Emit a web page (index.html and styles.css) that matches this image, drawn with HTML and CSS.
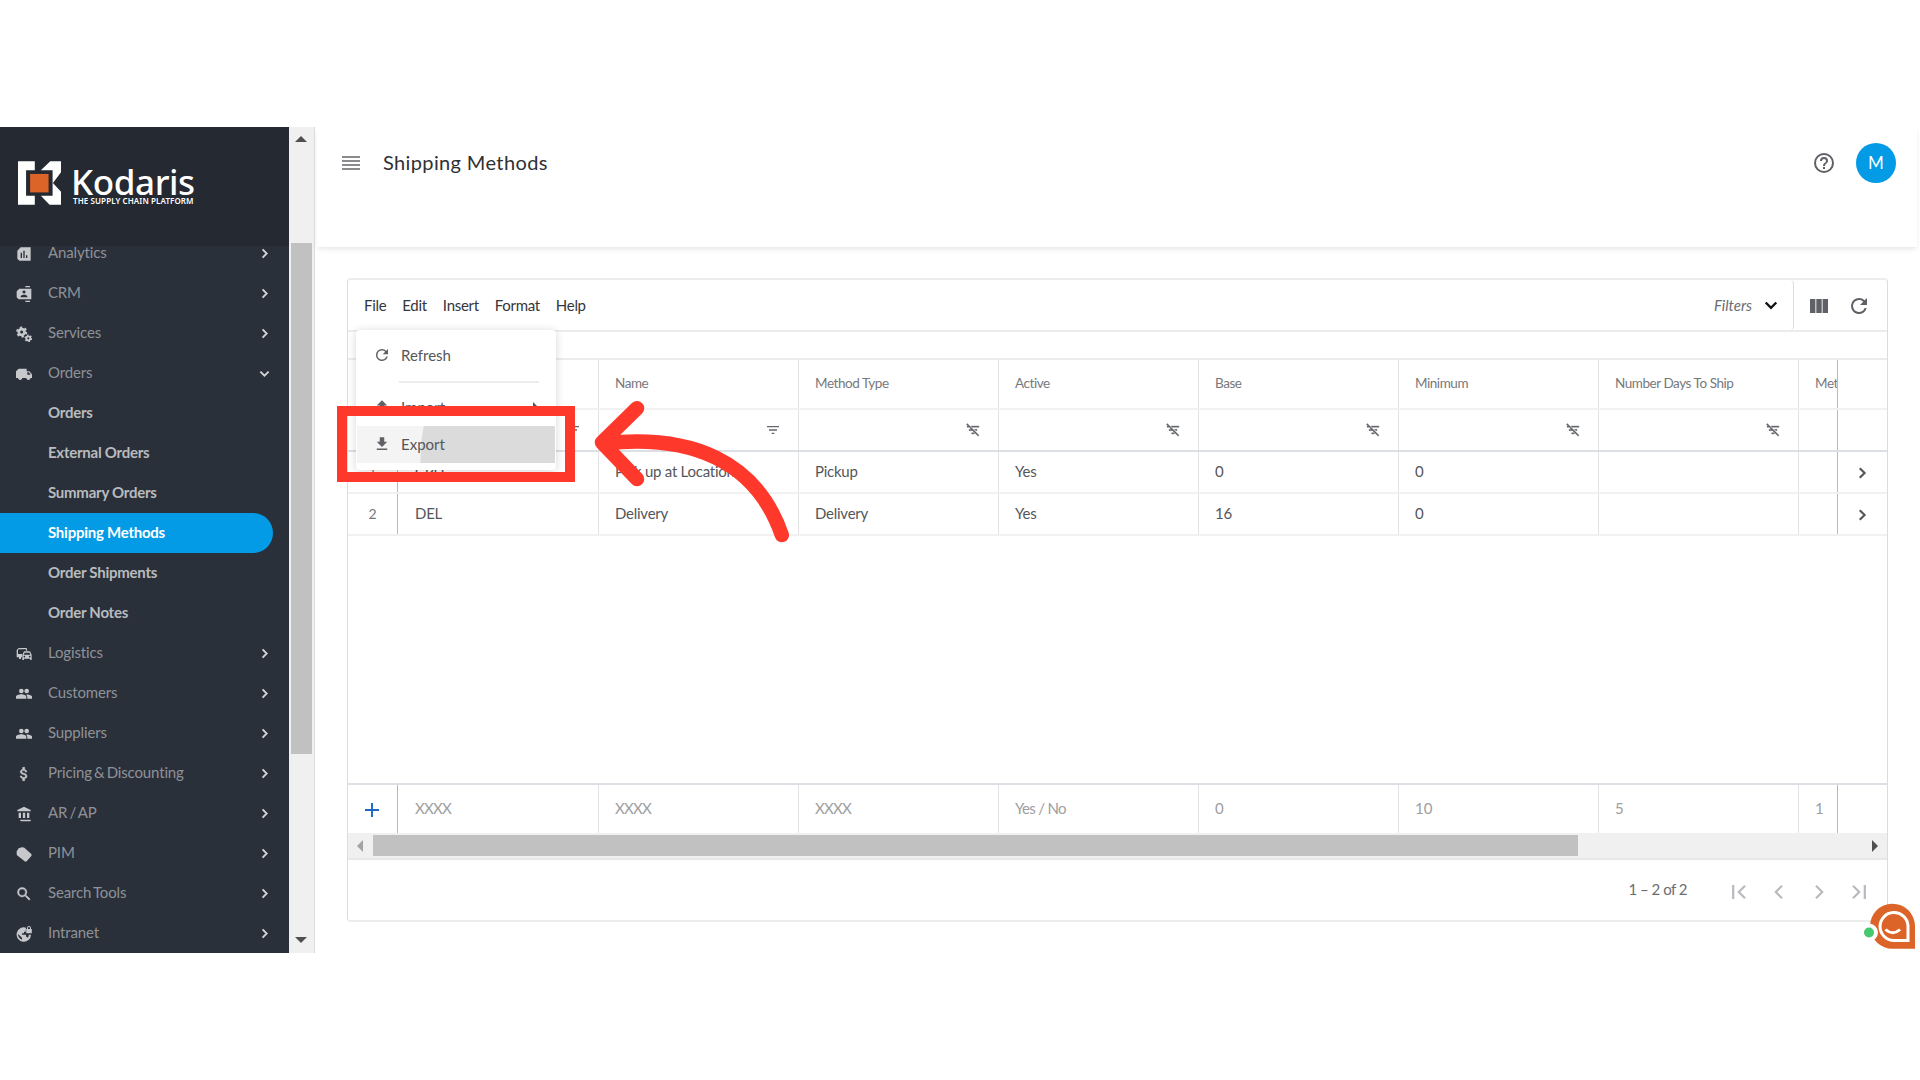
FILE: index.html
```html
<!DOCTYPE html>
<html lang="en">
<head>
    <meta charset="UTF-8">
    <meta name="viewport" content="width=device-width, initial-scale=1.0">
    <title>Shipping Methods - Kodaris</title>
    <link rel="stylesheet" href="styles.css">
</head>
<body>
    <!-- Shared icons -->
    <svg class="sprite" width="0" height="0">
        <symbol id="chevron" viewBox="0 0 24 24"><path d="M9.3 6.2L15.1 12l-5.8 5.8" fill="none" stroke="currentColor" stroke-width="2.6"/></symbol>
        <symbol id="refresh" viewBox="0 0 24 24"><path d="M17.65 6.35A7.96 7.96 0 0 0 12 4a8 8 0 1 0 7.73 10h-2.08A6 6 0 1 1 12 6c1.66 0 3.14.69 4.22 1.78L13 11h7V4z"/></symbol>
        <symbol id="people" viewBox="0 0 24 24"><circle cx="8" cy="7.5" r="3.5"/><circle cx="16" cy="7.5" r="3.5"/><path d="M0 19v-2.5c0-2.500 4.500-4 8-4s7.500 1.500 7.500 4V19zM17 19v-2.500c0-1.600-.7-2.900-1.800-3.900C19 12.400 24.500 14 24.500 16.500V19z"/></symbol>
        <symbol id="filter" viewBox="0 0 24 24"><path d="M10 18h4v-2h-4zM3 6v2h18V6zm3 7h12v-2H6z"/></symbol>
        <symbol id="filter-off" viewBox="0 0 24 24"><path d="M10.800 8H21V6H8.800zM16.500 13H18v-2h-4zM10 18h4v-2h-4zM21 19.800L3.500 2.300 2.100 3.700 4.400 6H3v2h3.400l3 3H6v2h5.400l8.200 8.200z" stroke="currentColor" stroke-width=".5"/></symbol>
        <symbol id="download" viewBox="0 0 24 24"><path d="M19 9h-4V3H9v6H5l7 7zM5 18v2h14v-2z"/></symbol>
        <symbol id="upload" viewBox="0 0 24 24"><path d="M9 16h6v-6h4l-7-7-7 7h4zm-4 2h14v2H5z"/></symbol>
    </svg>

    <div class="app">
        <aside class="sidebar">
            <div class="brand">
                <svg class="brand-mark" viewBox="54 125 128 130">
                    <path d="M54 125h50v27H78v76h26v27H54zM122 152l28-27h32v33l-24 32 24 26v39h-34l-26-27h35v-76z" fill="#fff"/>
                    <path d="M90 163h55v55H90z" fill="#dd6428"/>
                </svg>
                <div class="brand-text">
                    <span class="brand-name">Kodaris</span>
                    <span class="brand-tag">THE SUPPLY CHAIN PLATFORM</span>
                </div>
            </div>
            <nav class="nav">
                <ul class="nav-list">
                    <li class="nav-item"><svg class="nav-icon" viewBox="0 0 24 24"><path fill-rule="evenodd" d="M7 2h15v20H5l-3-3V7zM7 10v8h2v-8zm4-3v11h2V7zm4 7v4h2v-4z"/></svg><span>Analytics</span><svg class="nav-arrow"><use href="#chevron"/></svg></li>
                    <li class="nav-item"><svg class="nav-icon" viewBox="0 0 24 24"><path fill-rule="evenodd" d="M14 0h7v2h-7zM14 22h7v2h-7zM5 4h18v16H4l-3-3V8zM12 6.800a2.300 2.300 0 1 0 .1 0zM7 17h10v-1.500c0-1.700-3.300-2.500-5-2.500s-5 .8-5 2.500z"/></svg><span>CRM</span><svg class="nav-arrow"><use href="#chevron"/></svg></li>
                    <li class="nav-item"><svg class="nav-icon" viewBox="0 0 24 24"><g fill="none" stroke="currentColor"><circle cx="8.500" cy="9" r="4.300" stroke-width="4"/><circle cx="8.500" cy="9" r="6.800" stroke-width="3" stroke-dasharray="3.560 3.560"/><circle cx="18.500" cy="18.500" r="3" stroke-width="2.800"/><circle cx="18.500" cy="18.500" r="4.800" stroke-width="2" stroke-dasharray="2.500 2.500"/></g></svg><span>Services</span><svg class="nav-arrow"><use href="#chevron"/></svg></li>
                    <li class="nav-item"><svg class="nav-icon" viewBox="0 0 24 24"><path fill-rule="evenodd" d="M4 4h12v4h4l4 4.500V18h-2.200a3.200 3.200 0 0 1-6.300 0H9.500a3.200 3.200 0 0 1-6.300 0H0V8zM17 9.500V13h5l-2.700-3.500z"/><circle cx="6.300" cy="18.300" r="2.500"/><circle cx="18.600" cy="18.300" r="2.500"/></svg><span>Orders</span><svg class="nav-arrow nav-arrow-open"><use href="#chevron"/></svg></li>
                    <li class="nav-item nav-sub">Orders</li>
                    <li class="nav-item nav-sub">External Orders</li>
                    <li class="nav-item nav-sub">Summary Orders</li>
                    <li class="nav-item nav-sub active">Shipping Methods</li>
                    <li class="nav-item nav-sub">Order Shipments</li>
                    <li class="nav-item nav-sub">Order Notes</li>
                    <li class="nav-item"><svg class="nav-icon" viewBox="0 0 24 24"><path fill-rule="evenodd" d="M4 3h12l1 4h-2V5H4L3 6v6h6v5H7.500v2.500h-3V17H1V6zM12 8h9l2.500 5v8h-2.300v-2H12v2H9.500v-8zM12.800 10l-1 3h9.600l-1-3zM12.500 14.800a1.200 1.200 0 1 0 .1 0zM20.500 14.800a1.200 1.200 0 1 0 .1 0z"/></svg><span>Logistics</span><svg class="nav-arrow"><use href="#chevron"/></svg></li>
                    <li class="nav-item"><svg class="nav-icon"><use href="#people"/></svg><span>Customers</span><svg class="nav-arrow"><use href="#chevron"/></svg></li>
                    <li class="nav-item"><svg class="nav-icon"><use href="#people"/></svg><span>Suppliers</span><svg class="nav-arrow"><use href="#chevron"/></svg></li>
                    <li class="nav-item"><svg class="nav-icon" viewBox="0 0 24 24"><path d="M11.800 10.900c-2.270-.59-3-1.200-3-2.150 0-1.090 1.010-1.850 2.700-1.850 1.780 0 2.440.85 2.500 2.100h2.210c-.07-1.720-1.120-3.300-3.210-3.810V2h-3v3.160c-1.940.42-3.500 1.680-3.500 3.610 0 2.310 1.910 3.460 4.700 4.130 2.500.6 3 1.480 3 2.410 0 .69-.49 1.790-2.700 1.790-2.060 0-2.870-.92-2.980-2.100h-2.200c.12 2.190 1.760 3.420 3.680 3.830V22h3v-3.150c1.950-.37 3.500-1.500 3.500-3.550 0-2.840-2.430-3.810-4.700-4.400z" stroke="currentColor" stroke-width=".8"/></svg><span>Pricing &amp; Discounting</span><svg class="nav-arrow"><use href="#chevron"/></svg></li>
                    <li class="nav-item"><svg class="nav-icon" viewBox="0 0 24 24"><path d="M12 1l10 5v2H2V6zM4 10h3.500v8H4zM10.300 10h3.500v8h-3.500zM16.500 10H20v8h-3.500zM6 20.500h16V23H7z"/></svg><span>AR / AP</span><svg class="nav-arrow"><use href="#chevron"/></svg></li>
                    <li class="nav-item"><svg class="nav-icon" viewBox="0 0 24 24"><path d="M4 3.500Q10 .5 12.500 2.500L23 12q1 1.500 0 3l-7 8q-1.500 1-3 0L3 15Q1 14 1 12V8z"/></svg><span>PIM</span><svg class="nav-arrow"><use href="#chevron"/></svg></li>
                    <li class="nav-item"><svg class="nav-icon" viewBox="1 1 22 22"><path d="M15.500 14h-.79l-.28-.27A6.470 6.470 0 0 0 16 9.500 6.500 6.500 0 1 0 9.500 16c1.610 0 3.090-.59 4.230-1.570l.27.28v.79l5 4.990L20.490 19zm-6 0a4.500 4.500 0 1 1 0-9 4.500 4.500 0 0 1 0 9z" stroke="currentColor" stroke-width=".6"/></svg><span>Search Tools</span><svg class="nav-arrow"><use href="#chevron"/></svg></li>
                    <li class="nav-item"><svg class="nav-icon" viewBox="0 0 24 24"><path fill-rule="evenodd" d="M15 2.500A10.800 10.800 0 1 0 22.500 13H19c.2 2.500-.7 4-1.500 5-.5-1.200-1.300-1.700-2.500-1.700V13H9v-2h3V8.500h2.500zM3 12l6 5.500v3C5.500 19.500 3 16 3 12z"/><path fill-rule="evenodd" d="M16.500 4.500V3a3 3 0 0 1 6 0v1.500h1.200V11h-8.400V4.500zM18 4.500h3V3a1.500 1.500 0 0 0-3 0z"/></svg><span>Intranet</span><svg class="nav-arrow"><use href="#chevron"/></svg></li>
                </ul>
            </nav>
        </aside>
        <div class="scroll-y">
            <span class="scroll-up"></span>
            <span class="scroll-y-thumb"></span>
            <span class="scroll-down"></span>
        </div>

        <main class="main">
            <header class="topbar">
                <svg class="menu-icon" viewBox="0 0 18 14"><path d="M0 1h18M0 5h18M0 9h18M0 13h18" stroke="#65666b" stroke-width="1.700"/></svg>
                <h1 class="title">Shipping Methods</h1>
                <svg class="help-icon" viewBox="0 0 24 24"><path d="M11 18h2v-2h-2zm1-16a10 10 0 1 0 0 20 10 10 0 0 0 0-20zm0 18a8 8 0 1 1 0-16 8 8 0 0 1 0 16zm0-14a4 4 0 0 0-4 4h2c0-1.100.9-2 2-2s2 .9 2 2c0 2-3 1.750-3 5h2c0-2.250 3-2.500 3-5a4 4 0 0 0-4-4z"/></svg>
                <span class="avatar">M</span>
            </header>

            <section class="panel">
                <div class="toolbar">
                    <span class="tool">File</span>
                    <span class="tool">Edit</span>
                    <span class="tool">Insert</span>
                    <span class="tool">Format</span>
                    <span class="tool">Help</span>
                    <div class="filters">
                        <span class="filters-label">Filters</span>
                        <svg class="filters-arrow"><use href="#chevron"/></svg>
                    </div>
                    <div class="actions">
                        <svg class="columns-icon" viewBox="0 0 18 14"><path d="M0 0h5.400v14H0zM6.300 0h5.400v14H6.300zM12.600 0H18v14h-5.400z"/></svg>
                        <svg class="reload-icon"><use href="#refresh"/></svg>
                    </div>
                </div>
                <div class="strip"></div>

                <div class="row row-head">
                    <div class="num"></div>
                    <div class="cells">
                        <div class="cell">Code</div>
                        <div class="cell">Name</div>
                        <div class="cell">Method Type</div>
                        <div class="cell">Active</div>
                        <div class="cell">Base</div>
                        <div class="cell">Minimum</div>
                        <div class="cell">Number Days To Ship</div>
                        <div class="cell">Method</div>
                    </div>
                    <div class="end"></div>
                </div>
                <div class="row row-filter">
                    <div class="num"></div>
                    <div class="cells">
                        <div class="cell"><svg class="filter-icon"><use href="#filter"/></svg></div>
                        <div class="cell"><svg class="filter-icon"><use href="#filter"/></svg></div>
                        <div class="cell"><svg class="filter-icon"><use href="#filter-off"/></svg></div>
                        <div class="cell"><svg class="filter-icon"><use href="#filter-off"/></svg></div>
                        <div class="cell"><svg class="filter-icon"><use href="#filter-off"/></svg></div>
                        <div class="cell"><svg class="filter-icon"><use href="#filter-off"/></svg></div>
                        <div class="cell"><svg class="filter-icon"><use href="#filter-off"/></svg></div>
                        <div class="cell"></div>
                    </div>
                    <div class="end"></div>
                </div>
                <div class="row">
                    <div class="num">1</div>
                    <div class="cells">
                        <div class="cell">CPU</div>
                        <div class="cell">Pick up at Location</div>
                        <div class="cell">Pickup</div>
                        <div class="cell">Yes</div>
                        <div class="cell">0</div>
                        <div class="cell">0</div>
                        <div class="cell"></div>
                        <div class="cell"></div>
                    </div>
                    <div class="end"><svg class="row-arrow"><use href="#chevron"/></svg></div>
                </div>
                <div class="row">
                    <div class="num">2</div>
                    <div class="cells">
                        <div class="cell">DEL</div>
                        <div class="cell">Delivery</div>
                        <div class="cell">Delivery</div>
                        <div class="cell">Yes</div>
                        <div class="cell">16</div>
                        <div class="cell">0</div>
                        <div class="cell"></div>
                        <div class="cell"></div>
                    </div>
                    <div class="end"><svg class="row-arrow"><use href="#chevron"/></svg></div>
                </div>
                <div class="blank"></div>
                <div class="row row-new">
                    <div class="num"><svg class="plus" viewBox="0 0 14 14"><path d="M7 0v14M0 7h14" stroke="#1c66c8" stroke-width="1.900"/></svg></div>
                    <div class="cells">
                        <div class="cell">XXXX</div>
                        <div class="cell">XXXX</div>
                        <div class="cell">XXXX</div>
                        <div class="cell">Yes / No</div>
                        <div class="cell">0</div>
                        <div class="cell">10</div>
                        <div class="cell">5</div>
                        <div class="cell">1</div>
                    </div>
                    <div class="end"></div>
                </div>
                <div class="scroll-x">
                    <span class="scroll-left"></span>
                    <span class="scroll-x-thumb"></span>
                    <span class="scroll-right"></span>
                </div>
                <div class="pager">
                    <span class="pager-label">1 – 2 of 2</span>
                    <svg class="pager-icon" viewBox="0 0 14 14"><path d="M1.200 0v14M13 .8L6.800 7l6.200 6.200"/></svg>
                    <svg class="pager-icon" viewBox="0 0 14 14"><path d="M10 .8L3.800 7l6.200 6.200"/></svg>
                    <svg class="pager-icon" viewBox="0 0 14 14"><path d="M4 .8L10.200 7 4 13.200"/></svg>
                    <svg class="pager-icon" viewBox="0 0 14 14"><path d="M12.800 0v14M1 .8L7.200 7 1 13.200"/></svg>
                </div>
            </section>
        </main>
    </div>

    <!-- Open File menu -->
    <div class="menu">
        <div class="menu-item"><svg class="menu-glyph"><use href="#refresh"/></svg>Refresh</div>
        <div class="menu-divider"></div>
        <div class="menu-item menu-import"><svg class="menu-glyph"><use href="#upload"/></svg>Import<span class="submenu-arrow"></span></div>
        <div class="menu-item menu-export"><svg class="menu-glyph"><use href="#download"/></svg>Export</div>
    </div>

    <!-- Highlight box and arrow -->
    <div class="highlight"></div>
    <svg class="pointer" viewBox="590 395 210 155">
        <path d="M637 408.300L602 442.500l35 36.500M604 443.500C690 434 756 460 781.800 535" fill="none" stroke="#ff382c" stroke-width="14.500" stroke-linecap="round" stroke-linejoin="round"/>
    </svg>

    <svg class="chat" viewBox="0 0 54 48">
        <path d="M53 46.700H31A22.500 22.500 0 1 1 53 24z" fill="#dd6428"/>
        <path d="M46 38.500V23.500A14 14 0 1 0 32 38.500z" fill="none" stroke="#fff" stroke-width="3"/>
        <path d="M23.500 27.500q7.300 6.500 14.600 0" fill="none" stroke="#fff" stroke-width="3"/>
        <circle cx="7" cy="30.500" r="9" fill="#fff"/>
        <circle cx="7" cy="30.500" r="5" fill="#46c86e"/>
    </svg>
</body>
</html>
```
FILE: styles.css
```css
* {
    box-sizing: border-box;
}
body {
    margin: 0;
    padding-top: 127px;
    height: 1080px;
    background: #fff;
    overflow: hidden;
    font-family: Lato, "Open Sans", sans-serif;
    font-size: 15px;
    color: #55565a;
}
svg {
    display: block;
    fill: currentColor;
    flex: none;
}
.sprite {
    position: absolute;
}
.app {
    display: flex;
    height: 826px;
}

/* Sidebar */
.sidebar {
    display: flex;
    flex-direction: column;
    width: 289px;
    background: #2a303a;
}
.brand {
    display: flex;
    height: 119px;
    flex: none;
    padding: 34px 0 0 18px;
    background: #242932;
    color: #fff;
}
.brand-mark {
    width: 43px;
    height: 44px;
}
.brand-text {
    display: flex;
    flex-direction: column;
    margin-left: 10px;
    font-family: "Noto Sans", sans-serif;
}
.brand-name {
    font-size: 35px;
    line-height: 30px;
    padding-top: 6px;
    letter-spacing: -0.4px;
    font-weight: 500;
}
.brand-tag {
    margin-left: 2px;
    font-size: 8px;
    line-height: 8px;
    letter-spacing: 0.1px;
    font-weight: 600;
    white-space: nowrap;
}
.nav {
    flex: 1;
    overflow: hidden;
}
.nav-list {
    list-style: none;
    margin: -13px 0 0;
    padding: 0;
}
.nav-item {
    display: flex;
    align-items: center;
    height: 40px;
    padding: 0 16px 2px 16px;
    color: #8f9297;
    letter-spacing: -0.15px;
    word-spacing: -1.5px;
}
.nav-icon {
    width: 16px;
    height: 16px;
    margin: 3px 16px 0 0;
    color: #c6c8cb;
}
.nav-arrow {
    width: 17px;
    height: 17px;
    margin: 2px 0 0 auto;
    color: #d2d3d5;
}
.nav-arrow-open {
    transform: rotate(90deg);
}
.nav-sub {
    padding-left: 48px;
    color: #b9bbbe;
    font-weight: bold;
    letter-spacing: -0.25px;
    word-spacing: 0;
}
.nav-sub.active {
    margin-right: 16px;
    border-radius: 0 20px 20px 0;
    background: #039be5;
    color: #fff;
}

/* Sidebar scrollbar */
.scroll-y {
    display: flex;
    flex-direction: column;
    align-items: center;
    width: 26px;
    padding: 9px 3px 10px 2px;
    background: #f0f0f0;
    border-right: 1px solid #dcdcdc;
}
.scroll-up,
.scroll-down {
    border: 6px solid transparent;
}
.scroll-up {
    border-top: 0;
    border-bottom-color: #505050;
}
.scroll-down {
    margin-top: auto;
    border-bottom: 0;
    border-top-color: #505050;
}
.scroll-y-thumb {
    width: 21px;
    height: 511px;
    margin-top: 101px;
    background: #c1c1c1;
}

/* Page header */
.main {
    flex: 1;
    padding-left: 2px;
}
.topbar {
    display: flex;
    align-items: center;
    height: 120px;
    margin-right: 3px;
    padding: 0 21px 48px 25px;
    box-shadow: 0 3px 5px -1px rgba(0, 0, 0, 0.1);
}
.menu-icon {
    width: 18px;
    height: 14px;
}
.title {
    margin: 0 auto 2px 23px;
    font-size: 20px;
    font-weight: normal;
    letter-spacing: 0.37px;
    color: #2f3034;
}
.help-icon {
    width: 24px;
    height: 24px;
    margin-right: 20px;
    color: #606166;
}
.avatar {
    width: 40px;
    height: 40px;
    border-radius: 50%;
    background: #039be5;
    color: #fff;
    font-size: 17px;
    line-height: 40px;
    text-align: center;
}

/* Grid panel */
.panel {
    display: flex;
    flex-direction: column;
    width: 1541px;
    height: 644px;
    margin: 31px 0 0 30px;
    border: 1px solid #dcdcdf;
    border-top: 2px solid #ececec;
    border-bottom: 2px solid #ececec;
    border-radius: 4px;
}
.toolbar {
    display: flex;
    align-items: center;
    height: 52px;
    padding-left: 16px;
    border-bottom: 2px solid #ececec;
    color: #35363a;
    letter-spacing: -0.3px;
}
.tool {
    margin-right: 16px;
}
.filters {
    display: flex;
    align-items: center;
    align-self: stretch;
    margin-left: auto;
    padding-right: 11px;
    border-right: 1px solid #dcdcdf;
    border-radius: 4px;
}
.filters-label {
    font-style: italic;
    letter-spacing: 0;
    color: #6c6d71;
}
.filters-arrow {
    width: 22px;
    height: 22px;
    margin-left: 8px;
    transform: rotate(90deg);
    color: #111;
}
.actions {
    display: flex;
    align-items: center;
    width: 93px;
    padding-left: 16px;
    color: #606166;
}
.columns-icon {
    width: 18px;
    height: 14px;
    margin-top: 2px;
}
.reload-icon {
    width: 24px;
    height: 24px;
    margin: 2px 0 0 19px;
}
.strip {
    height: 28px;
    border-bottom: 2px solid #ececec;
}
.row {
    display: flex;
    height: 42px;
    border-bottom: 2px solid #f1f1f1;
}
.num,
.end {
    display: flex;
    align-items: center;
    justify-content: center;
    width: 50px;
    flex: none;
}
.num {
    padding-bottom: 2px;
    border-right: 1px solid #b6b8c4;
    font-size: 14px;
    color: #77787c;
}
.end {
    border-left: 1px solid #b6b8c4;
}
.cells {
    display: flex;
    flex: 1;
    overflow: hidden;
}
.cell {
    display: flex;
    align-items: center;
    width: 200px;
    flex: none;
    padding: 0 17px 2px 16px;
    border-right: 1px solid #e2e3e5;
    letter-spacing: -0.25px;
    white-space: nowrap;
}
.cell:first-child {
    width: 201px;
    padding-left: 17px;
}
.row-head {
    height: 50px;
    color: #77787c;
}
.row-head .cell {
    padding-bottom: 3px;
    font-size: 13.5px;
    letter-spacing: -0.45px;
}
.row-filter {
    border-bottom-color: #dcdfe4;
}
.filter-icon {
    width: 16px;
    height: 16px;
    margin: 2px 0 0 auto;
    color: #65666b;
}
.row-arrow {
    width: 20px;
    height: 20px;
    margin: 2px 2px 0 0;
}
.blank {
    flex: 1;
    border-bottom: 2px solid #dcdfe4;
}
.row-new {
    height: 48px;
    border-bottom: 0;
}
.row-new .cell {
    color: #9d9ea1;
    letter-spacing: -0.7px;
}
.row-new .cell:nth-child(n+5) {
    letter-spacing: 0;
}
.plus {
    width: 14px;
    height: 14px;
    margin: 4px 1px 0 0;
}

/* Grid scrollbar */
.scroll-x {
    display: flex;
    align-items: center;
    height: 27px;
    padding: 0 9px;
    background: #f0f0f0;
    border-bottom: 2px solid #e7e7e7;
}
.scroll-left,
.scroll-right {
    border: 6px solid transparent;
}
.scroll-left {
    border-left: 0;
    border-right-color: #a3a3a3;
}
.scroll-right {
    margin-left: auto;
    border-right: 0;
    border-left-color: #505050;
}
.scroll-x-thumb {
    width: 1205px;
    height: 21px;
    margin-left: 10px;
    background: #c1c1c1;
}
.pager {
    display: flex;
    align-items: center;
    justify-content: flex-end;
    height: 60px;
    padding-right: 21px;
    color: #6c6d71;
}
.pager-label {
    margin: 0 19px 3px 0;
    letter-spacing: -0.5px;
}
.pager-icon {
    width: 14px;
    height: 14px;
    margin: 3px 0 0 26px;
    fill: none;
    stroke: #b9babd;
    stroke-width: 2.2;
}

/* File menu */
.menu {
    position: absolute;
    left: 356px;
    top: 330px;
    width: 200px;
    height: 140px;
    padding: 7px 1px;
    background: #fff;
    border-radius: 4px;
    box-shadow: 0 1px 8px rgba(0, 0, 0, 0.17);
}
.menu-item {
    display: flex;
    align-items: center;
    height: 36px;
    padding: 0 0 1px 16px;
}
.menu-glyph {
    width: 18px;
    height: 18px;
    margin-right: 10px;
    color: #606166;
}
.menu-divider {
    height: 2px;
    margin: 8px 16px 8px 42px;
    background: #ececec;
}
.menu-import {
    padding-bottom: 4px;
}
.submenu-arrow {
    margin: 0 17px 0 auto;
    border: 5px solid transparent;
    border-left-color: #55565a;
    border-right: 0;
}
.menu-export {
    height: 37px;
    margin-top: -1px;
    background: radial-gradient(circle at 268px 36px, #dbdbdb 204px, #f4f4f4 205px);
}

/* Annotation */
.highlight {
    position: absolute;
    left: 337px;
    top: 406px;
    width: 238px;
    height: 76px;
    border: 10px solid #ff382c;
}
.pointer {
    position: absolute;
    left: 590px;
    top: 395px;
    width: 210px;
    height: 155px;
}
.chat {
    position: absolute;
    left: 1862px;
    top: 902px;
    width: 54px;
    height: 48px;
}
```
